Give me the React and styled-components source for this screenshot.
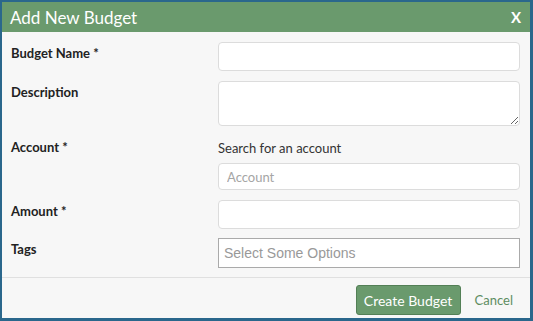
import React from 'react';
import styled, {createGlobalStyle} from 'styled-components';

const GlobalStyle = createGlobalStyle`
    html, body {
        margin: 0;
        padding: 0;
        background: #ffffff;
    }
    * {
        box-sizing: border-box;
    }
`;

const Frame = styled.div`
    width: 533px;
    height: 321px;
    display: flex;
    flex-direction: column;
    background-color: #f7f7f7;
    border: 2px solid #2a678c;
    border-right-width: 3px;
    border-bottom-width: 3px;
    font-family: Lato, 'Open Sans', sans-serif;
    color: #222;
`;

const Header = styled.div`
    height: 30px;
    flex: none;
    display: flex;
    align-items: center;
    justify-content: space-between;
    padding: 0 9px 0 8px;
    background-color: #6a9a6d;
    color: #fff;
`;

const Title = styled.h1`
    margin: 0;
    font-size: 17px;
    font-weight: 400;
`;

const Close = styled.button`
    border: 0;
    padding: 0;
    background: none;
    color: #fff;
    font-family: inherit;
    font-size: 15px;
    font-weight: 700;
    cursor: pointer;
`;

const Form = styled.form`
    flex: 1;
    display: flex;
    flex-direction: column;
    margin: 0;
`;

const Fields = styled.div`
    display: flex;
    flex-direction: column;
    gap: 10px;
    padding: 10px 10px 9px 9px;
    border-bottom: 1px solid #e0e0e0;
`;

const Row = styled.div`
    display: grid;
    grid-template-columns: 207px 1fr;
    margin-top: ${({offset}) => offset || 0}px;
`;

const Label = styled.label`
    padding-top: 3px;
    font-size: 13px;
    line-height: 16px;
    font-weight: 700;
    color: #222;
`;

const Control = styled.div`
    display: flex;
    flex-direction: column;
`;

const Hint = styled.div`
    padding-top: 4px;
    margin-bottom: 7px;
    font-size: 13px;
    line-height: 16px;
    color: #333;
`;

const Input = styled.input`
    width: 100%;
    height: ${({h}) => h || 29}px;
    padding: 0 8px;
    border: 1px solid #dcdcdc;
    border-radius: 4px;
    background: #fff;
    font-family: Lato, 'Open Sans', sans-serif;
    font-size: 13px;
    color: #333;
    outline: none;

    &::placeholder {
        color: #a5a5a5;
    }
`;

const TextArea = styled.textarea`
    display: block;
    width: 100%;
    height: 45px;
    padding: 6px 8px;
    border: 1px solid #dcdcdc;
    border-radius: 4px;
    background: #fff;
    font-family: Lato, 'Open Sans', sans-serif;
    font-size: 13px;
    outline: none;
`;

const Select = styled.div`
    height: 30px;
    display: flex;
    align-items: center;
    padding: 0 5px;
    border: 1px solid #aaaaaa;
    background: #fff;
    font-family: 'Liberation Sans', Arial, sans-serif;
    font-size: 14px;
    color: #999;
`;

const Footer = styled.div`
    display: flex;
    align-items: center;
    justify-content: flex-end;
    gap: 14px;
    padding: 7px 17px 0 0;
`;

const PrimaryButton = styled.button`
    width: 105px;
    height: 30px;
    border: 1px solid #537f56;
    border-radius: 3px;
    background-color: #6a9a6d;
    color: #fff;
    font-family: Lato, 'Open Sans', sans-serif;
    font-size: 14px;
    cursor: pointer;
`;

const LinkButton = styled.button`
    border: 0;
    padding: 0;
    background: none;
    color: #5e8d61;
    font-family: Lato, 'Open Sans', sans-serif;
    font-size: 13px;
    cursor: pointer;
`;

const App = () => (
    <>
        <GlobalStyle />
        <Frame>
            <Header>
                <Title>Add New Budget</Title>
                <Close type='button'>X</Close>
            </Header>
            <Form onSubmit={e => e.preventDefault()}>
                <Fields>
                    <Row>
                        <Label>Budget Name *</Label>
                        <Input />
                    </Row>
                    <Row>
                        <Label>Description</Label>
                        <TextArea />
                    </Row>
                    <Row>
                        <Label>Account *</Label>
                        <Control>
                            <Hint>Search for an account</Hint>
                            <Input h={27} placeholder='Account' />
                        </Control>
                    </Row>
                    <Row>
                        <Label>Amount *</Label>
                        <Input />
                    </Row>
                    <Row offset={-1}>
                        <Label>Tags</Label>
                        <Select>Select Some Options</Select>
                    </Row>
                </Fields>
                <Footer>
                    <PrimaryButton type='submit'>Create Budget</PrimaryButton>
                    <LinkButton type='button'>Cancel</LinkButton>
                </Footer>
            </Form>
        </Frame>
    </>
);

export default App;
